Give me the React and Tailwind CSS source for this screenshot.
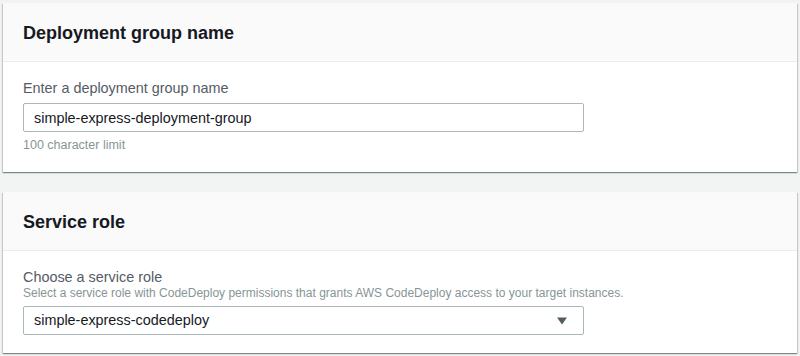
import React from 'react';

function Card({ title, children, bodyClass }) {
  return (
    <div className="bg-white shadow-[0_1px_1px_0_rgba(0,28,36,0.3),1px_1px_1px_0_rgba(0,28,36,0.15),-1px_1px_1px_0_rgba(0,28,36,0.15)]">
      <div className="h-[59px] pt-[3px] flex items-center px-[20px] bg-[#fafafa] border-b border-[#eaeded]">
        <h2 className="text-[18px] font-bold text-[#16191f]">{title}</h2>
      </div>
      <div className={bodyClass}>{children}</div>
    </div>
  );
}

export default function App() {
  return (
    <div
      className="w-[800px] h-[356px] bg-[#f2f3f3] px-[3px] pt-[3px] flex flex-col gap-[20px] overflow-hidden"
      style={{ fontFamily: '"Liberation Sans", Arial, sans-serif' }}
    >
      <Card title="Deployment group name" bodyClass="px-[20px] pt-[17px] pb-[19px]">
        <label className="block text-[14.4px] text-[#545b64] leading-[18px]">Enter a deployment group name</label>
        <input
          type="text"
          readOnly
          value="simple-express-deployment-group"
          className="mt-[6px] block w-[561px] h-[29px] px-[10px] text-[14.4px] text-[#16191f] border border-[#aab7b8] rounded-[2px] outline-none"
        />
        <div className="mt-[6px] text-[12.5px] text-[#879596] leading-[15px]">100 character limit</div>
      </Card>
      <Card title="Service role" bodyClass="px-[20px] pt-[17px] pb-[18px]">
        <label className="block text-[14.4px] text-[#545b64] leading-[18px]">Choose a service role</label>
        <div className="text-[12px] text-[#879596] leading-[15px]">
          Select a service role with CodeDeploy permissions that grants AWS CodeDeploy access to your target instances.
        </div>
        <div className="mt-[5px] w-[561px] h-[29px] px-[10px] flex items-center justify-between border border-[#aab7b8] rounded-[2px]">
          <span className="text-[14.4px] text-[#16191f]">simple-express-codedeploy</span>
          <svg width="10" height="8" viewBox="0 0 10 8" className="mr-[6px]">
            <path d="M0 0.5h10L5 7.5z" fill="#545b64" />
          </svg>
        </div>
      </Card>
    </div>
  );
}
